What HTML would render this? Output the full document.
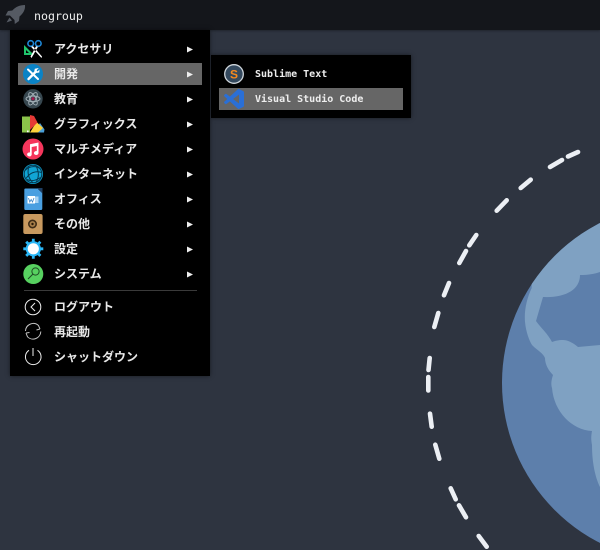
<!DOCTYPE html>
<html><head><meta charset="utf-8">
<style>
html,body{margin:0;padding:0;width:600px;height:550px;overflow:hidden;background:#2e3440}
body{position:relative;font-family:"Liberation Sans","Noto Sans CJK JP",sans-serif}
svg.bg{position:absolute;left:0;top:0}
.bar{position:absolute;left:0;top:0;width:600px;height:30px;background:#14161b;box-shadow:0 1px 2px rgba(0,0,0,.3)}
.title{position:absolute;left:34px;top:8px;font:11.6px/16px "DejaVu Sans Mono",monospace;color:#eee}
.menu{position:absolute;left:10px;top:30px;width:200px;height:346px;background:#000;box-shadow:0 0 4px rgba(0,0,0,.5)}
.sub{position:absolute;left:211px;top:55px;width:200px;height:63px;background:#000;box-shadow:0 0 4px rgba(0,0,0,.5)}
.hl{position:absolute;background:#666}
.t{position:absolute;left:54px;font:bold 12px/16px "Noto Sans CJK JP",sans-serif;color:#e8e8e8;white-space:nowrap}
.m{position:absolute;left:255px;font:bold 10px/14px "DejaVu Sans Mono",monospace;color:#eee;white-space:pre}
.sep{position:absolute;height:1px;background:#3a3a3a}
svg.ic{position:absolute;left:0;top:0}
</style></head><body>
<svg class="bg" width="600" height="550" viewBox="0 0 600 550">
<defs><clipPath id="pl"><circle cx="681.6" cy="383" r="179.6"/></clipPath></defs>
<circle cx="681.6" cy="383" r="179.6" fill="#5d7fab"/>
<path clip-path="url(#pl)" fill="#7fa1c2" d="M600 200L530 200L531.7 288C527 298 524 310 525 322C526 332 529 340 532 345C538 351 543 353 545 358C545 365 549 371 553 375C551 381 551 385 552 388C554 412 572 430 592 431C591 436 591 440 592 445C592 462 595 477 600 487L620 487L620 345L600 345L578 347C572 342 567 340 563 340C558 340 555 341 552 342C548 334 541 328 536 321L543 297C565 298 580 290 580 275C588 275 594 274 600 272Z"/>
<g stroke="#eceff4" stroke-width="4.6" stroke-linecap="round" fill="none">
<path d="M578 152L568 156.5M562 160L550 167M530.7 179.7L520.7 188M506.7 200.3L496.7 210.7M476.3 235L469.3 245.3M466 251L459.3 263M449 283L444 295.3M438.3 313L434.3 327M429.7 358L428.5 370M428.3 377L428.3 390.5M430 413.7L431.7 426.7M435.3 444.7L439.3 458.7M450.7 488.3L455.7 499.3M459 505.3L466 517.3M478.7 536L486.7 546.7"/>
</g>
</svg>
<div class="bar"></div>
<div class="title">nogroup</div>
<div class="menu"><div class="sep" style="left:14px;top:260px;width:173px"></div></div>
<div class="sub"></div>
<div class="hl" style="left:18px;top:63px;width:184px;height:22px"></div>
<div class="hl" style="left:219px;top:88px;width:184px;height:22px"></div>

<div class="t" style="top:41px">アクセサリ</div>
<div class="t" style="top:66px">開発</div>
<div class="t" style="top:91px">教育</div>
<div class="t" style="top:116px">グラフィックス</div>
<div class="t" style="top:141px">マルチメディア</div>
<div class="t" style="top:166px">インターネット</div>
<div class="t" style="top:191px">オフィス</div>
<div class="t" style="top:216px">その他</div>
<div class="t" style="top:241px">設定</div>
<div class="t" style="top:266px">システム</div>
<div class="t" style="top:299px">ログアウト</div>
<div class="t" style="top:324px">再起動</div>
<div class="t" style="top:349px">シャットダウン</div>
<div class="m" style="top:68px">Sublime Text</div>
<div class="m" style="top:93px">Visual Studio Code</div>

<svg class="ic" width="600" height="550" viewBox="0 0 600 550">
<!-- rocket -->
<path fill="#555a63" d="M25 5C20 5 15.500 6.800 12.300 10.500L8 11L5.500 15.500L10 15.500L14.500 20L14.800 24L19 21L19.500 16.500C23 13.500 25.500 10 25 5Z"/>
<path fill="#555a63" d="M9.500 17.500L6.500 22.500L12 20.500Z"/>
<!-- arrows -->
<g fill="#eee">
<path d="M187 46.500L193 49.500L187 52.500Z"/><path d="M187 71.500L193 74.500L187 77.500Z"/><path d="M187 96.500L193 99.500L187 102.500Z"/><path d="M187 121.500L193 124.500L187 127.500Z"/><path d="M187 146.500L193 149.500L187 152.500Z"/><path d="M187 171.500L193 174.500L187 177.500Z"/><path d="M187 196.500L193 199.500L187 202.500Z"/><path d="M187 221.500L193 224.500L187 227.500Z"/><path d="M187 246.500L193 249.500L187 252.500Z"/><path d="M187 271.500L193 274.500L187 277.500Z"/>
</g>
<!-- accessories -->
<path fill="#1fc46b" d="M24 45L24 55L34 55Z"/>
<path fill="#000" d="M26 50L26 53L29 53Z"/>
<circle cx="30.700" cy="43.500" r="2.800" fill="none" stroke="#1e88d8" stroke-width="1.600"/>
<circle cx="38.300" cy="43.500" r="2.800" fill="none" stroke="#1e88d8" stroke-width="1.600"/>
<path fill="#fff" d="M31 46.800L33 46.300L42 56.500L41.500 58ZM38 46.800L36 46.300L30.500 56.500L31.500 58Z"/>
<!-- dev -->
<circle cx="33" cy="74" r="10" fill="#0a83c6"/>
<path stroke="#fff" stroke-width="2" fill="none" stroke-linecap="round" d="M28 69.500L38 79"/>
<path stroke="#fff" stroke-width="2.400" fill="none" stroke-linecap="round" d="M28.500 79L36 71.500"/>
<path fill="#fff" d="M34.800 68.800L38.800 68L36.500 70.500L37.500 71.500L39.500 69.500L39.300 72.500L36 73L34.300 71.300Z"/>
<!-- edu -->
<circle cx="33" cy="98.800" r="9.700" fill="#37474f"/>
<g fill="none" stroke="#a7b4bb" stroke-width=".9">
<ellipse cx="33" cy="98.800" rx="7" ry="2.800"/>
<ellipse cx="33" cy="98.800" rx="7" ry="2.800" transform="rotate(60 33 98.800)"/>
<ellipse cx="33" cy="98.800" rx="7" ry="2.800" transform="rotate(120 33 98.800)"/>
</g>
<circle cx="33" cy="98.800" r="1.500" fill="#a8174f"/>
<!-- graphics -->
<path fill="#4b9fd8" d="M33 132.500L40 123L44.500 129.500L44 132.500Z"/>
<path fill="#fdd13c" d="M30 132.500L36.500 122L43 128L38 132.500Z"/>
<path fill="#e53935" d="M30 130L30 115L34 116L37.500 122.500Z"/>
<path fill="#8bc34a" d="M22 116.500L30 116.500L30 132.500L22 132.500Z"/>
<rect x="27" y="130.500" width="1.600" height="1.800" fill="#fff"/>
<!-- music -->
<circle cx="33" cy="149" r="10.500" fill="#f5365c"/>
<path fill="#fff" d="M30 144.300L38.500 142.500L38.500 153A2.300 2 0 1 1 36.800 151.100L36.800 146L31.700 147L31.700 154.500A2.300 2 0 1 1 30 152.500Z"/>
<!-- internet -->
<circle cx="33" cy="174" r="10" fill="#11a5d4"/>
<g fill="none" stroke="#053a52" stroke-width="1">
<circle cx="33" cy="174" r="8.800"/>
<path d="M25 170.500C30 165.500 37 165.500 41 169.500M26 178.500C30 172.500 36 170.500 41.500 172.500M29 166C27 172.500 28.500 178.500 33 182.800M36 166C39 171.500 39 177.500 36 182.500M27 179.500C31 181.500 36 180.500 40.500 177.500"/>
</g>
<!-- office -->
<path fill="#4a9fe0" d="M25.500 188.500L37.500 188.500L42.300 193L42.300 208.500Q42.300 210 41 210L25.500 210Q24.300 210 24.300 208.500L24.300 189.500Q24.300 188.500 25.500 188.500Z"/>
<path fill="#1f3f63" d="M37 188L42.500 193.500L42.500 188Z"/>
<rect x="27.500" y="196" width="7.500" height="7.500" fill="#fff"/>
<rect x="35" y="196.500" width="3.500" height="6.500" fill="#a9d3f3"/>
<path d="M28.500 198L29.800 202L31.200 199.500L32.500 202L34 198" stroke="#3a86c8" stroke-width=".8" fill="none"/>
<!-- other -->
<rect x="23.300" y="214" width="19.300" height="20" rx="2" fill="#c8995f"/>
<circle cx="32.500" cy="224" r="4.500" fill="#3f2c16"/>
<circle cx="32.500" cy="224" r="2.900" fill="#a97f4a"/>
<circle cx="32.500" cy="224" r="1.200" fill="#2a1a08"/>
<!-- settings -->
<circle cx="33.300" cy="248.800" r="7.600" fill="#29b6f6"/>
<g stroke="#29b6f6" stroke-width="2.800">
<path d="M33.300 238.800V258.800M23.300 248.800H43.300M26.200 241.700L40.400 255.900M40.400 241.700L26.200 255.900"/>
</g>
<circle cx="33.300" cy="248.800" r="5.600" fill="#fff"/>
<!-- system -->
<circle cx="33.300" cy="274" r="10" fill="#57d160"/>
<circle cx="35.500" cy="271.500" r="3.600" fill="none" stroke="#1f4a24" stroke-width="1"/>
<path stroke="#1f4a24" stroke-width="1.100" d="M33 274L28 279"/>
<!-- logout -->
<circle cx="33" cy="307" r="7.800" fill="none" stroke="#eee" stroke-width="1"/>
<path d="M35 303L31 307L35 311" fill="none" stroke="#eee" stroke-width="1"/>
<!-- reboot -->
<g fill="none" stroke="#c4c4c4" stroke-width="1">
<path d="M25.500 331A7.800 7.800 0 0 1 38.500 325.500L40 329M36.500 330L40 329"/>
<path d="M40.800 331.500A7.800 7.800 0 0 1 27.500 336.800L26 333M29.500 332.500L26 333"/>
</g>
<!-- shutdown -->
<path d="M29 350.300A7.800 7.800 0 1 0 37.500 350.300" fill="none" stroke="#eee" stroke-width="1"/>
<path d="M33 348V356" stroke="#eee" stroke-width="1"/>
<!-- sublime -->
<circle cx="234" cy="74" r="9.300" fill="#34495e" stroke="#cfd6dc" stroke-width="1.300"/>
<text x="234" y="78.500" text-anchor="middle" font-family="Liberation Sans,sans-serif" font-size="12" font-weight="bold" fill="#f58a1f">S</text>
<!-- vscode -->
<g transform="translate(224 89) scale(.8333)">
<path fill="#2a6fd6" d="M23.150 2.587L18.210.21a1.494 1.494 0 0 0-1.705.29l-9.460 8.630-4.120-3.128a.999.999 0 0 0-1.276.057L.327 7.261A1 1 0 0 0 .326 8.740L3.899 12 .326 15.260a1 1 0 0 0 .001 1.479L1.650 17.940a.999.999 0 0 0 1.276.057l4.120-3.128 9.460 8.630a1.492 1.492 0 0 0 1.704.29l4.942-2.377A1.500 1.500 0 0 0 24 20.060V3.939a1.500 1.500 0 0 0-.85-1.352zm-5.146 14.861L10.826 12l7.178-5.448v10.896z"/>
</g>
</svg>
</body></html>
